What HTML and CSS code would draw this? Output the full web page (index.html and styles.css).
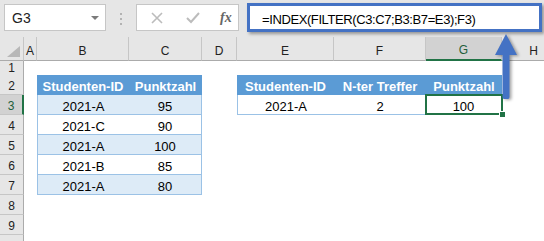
FILE: index.html
```html
<!DOCTYPE html>
<html lang="de">
<head>
    <meta charset="UTF-8">
    <meta name="viewport" content="width=device-width, initial-scale=1.0">
    <title>INDEX FILTER</title>
    <link rel="stylesheet" href="styles.css">
</head>
<body>
    <div class="app">
        <div class="topbar">
            <div class="namebox">
                <span>G3</span>
                <span class="caret"></span>
            </div>
            <div class="grip"><i></i><i></i><i></i></div>
            <div class="fnbox">
                <svg class="cancel" width="12" height="12" viewBox="0 0 12 12">
                    <path d="M1 1 L11 11 M11 1 L1 11" stroke="#bcbcbc" stroke-width="1.6" fill="none"/>
                </svg>
                <svg class="enter" width="14" height="12" viewBox="0 0 14 12">
                    <path d="M1 6 L5 10 L13 1" stroke="#bcbcbc" stroke-width="2" fill="none"/>
                </svg>
                <span class="fx">fx</span>
            </div>
            <div class="formula">=INDEX(FILTER(C3:C7;B3:B7=E3);F3)</div>
        </div>

        <div class="sheet">
            <div class="row colhead">
                <div class="corner"><span></span></div>
                <div>A</div><div>B</div><div>C</div><div>D</div>
                <div>E</div><div>F</div><div class="sel">G</div><div>H</div>
            </div>
            <div class="row r1">
                <div class="rh">1</div>
            </div>
            <div class="row">
                <div class="rh">2</div><div></div>
                <div class="th">Studenten-ID</div><div class="th">Punktzahl</div><div></div>
                <div class="th">Studenten-ID</div><div class="th">N-ter Treffer</div><div class="th">Punktzahl</div>
            </div>
            <div class="row">
                <div class="rh sel">3</div><div></div>
                <div class="td band first">2021-A</div><div class="td band last">95</div><div></div>
                <div class="td first">2021-A</div><div class="td">2</div><div class="td last active">100</div>
            </div>
            <div class="row">
                <div class="rh">4</div><div></div>
                <div class="td first">2021-C</div><div class="td last">90</div>
            </div>
            <div class="row">
                <div class="rh">5</div><div></div>
                <div class="td band first">2021-A</div><div class="td band last">100</div>
            </div>
            <div class="row">
                <div class="rh">6</div><div></div>
                <div class="td first">2021-B</div><div class="td last">85</div>
            </div>
            <div class="row">
                <div class="rh">7</div><div></div>
                <div class="td band first">2021-A</div><div class="td band last">80</div>
            </div>
            <div class="row"><div class="rh">8</div></div>
            <div class="row"><div class="rh">9</div></div>
            <div class="row"><div class="rh"></div></div>
        </div>

        <svg class="arrow" width="30" height="70" viewBox="0 0 30 70">
            <path d="M12 1 L23 22 L15.5 22 L15.5 64 Q15.5 66 14 66 L10 66 Q8.5 66 8.5 64 L8.5 22 L1 22 Z" fill="#4472c4"/>
        </svg>
    </div>
</body>
</html>
```

FILE: styles.css
```css
body {
    margin: 0;
    overflow: hidden;
    background: #ffffff;
    font-family: "Liberation Sans", Arial, sans-serif;
}

.app {
    position: relative;
    width: 544px;
    height: 241px;
    overflow: hidden;
}

/* formula bar */
.topbar {
    display: flex;
    align-items: flex-start;
    height: 37px;
    padding: 4px 0 0 4px;
    box-sizing: border-box;
    background: #e6e6e6;
}

.namebox {
    display: flex;
    align-items: center;
    justify-content: space-between;
    width: 102px;
    height: 27px;
    box-sizing: border-box;
    padding: 0 6px 0 7px;
    background: #ffffff;
    border: 1px solid #c6c6c6;
    font-size: 14px;
    color: #222222;
}

.caret {
    border-left: 4px solid transparent;
    border-right: 4px solid transparent;
    border-top: 4px solid #7b7b7b;
}

.grip {
    display: flex;
    flex-direction: column;
    align-items: center;
    gap: 3px;
    width: 30px;
    padding-top: 9px;
}

.grip i {
    width: 2px;
    height: 2px;
    background: #b3b3b3;
}

.fnbox {
    display: flex;
    align-items: center;
    width: 103px;
    height: 27px;
    box-sizing: border-box;
    padding-left: 14px;
    background: #ffffff;
    border: 1px solid #c6c6c6;
}

.cancel {
    margin-right: 23px;
}

.enter {
    margin-right: 20px;
}

.fx {
    font-family: "Liberation Serif", serif;
    font-style: italic;
    font-weight: bold;
    font-size: 14px;
    color: #666666;
}

.formula {
    width: 295px;
    height: 29px;
    box-sizing: border-box;
    margin: -1px 0 0 8px;
    padding: 6px 0 0 12px;
    background: #ffffff;
    border: 3px solid #4472c4;
    box-shadow: 2px 2px 3px rgba(0, 0, 0, 0.35);
    font-size: 13px;
    letter-spacing: -0.4px;
    color: #000000;
    white-space: nowrap;
}

/* grid */
.row {
    display: grid;
    grid-template-columns: 24px 13px 92px 73px 35px 97px 92px 76px 64px;
    height: 20px;
}

.row > div {
    box-sizing: border-box;
    display: flex;
    align-items: center;
    justify-content: center;
    padding-top: 3px;
    font-size: 13px;
}

.r1 {
    height: 14px;
}

.r1 > .rh {
    padding-top: 0;
}

.colhead {
    height: 24px;
    background: #e6e6e6;
}

.colhead > div {
    padding-top: 4px;
    font-size: 12px;
    color: #222222;
    border-right: 1px solid #c6c6c6;
    border-bottom: 1px solid #ababab;
}

.colhead > .sel {
    background: #d2d2d2;
    color: #1f5f3a;
    border-bottom: 2px solid #217346;
}

.corner {
    position: relative;
}

.corner span {
    position: absolute;
    right: 3px;
    bottom: 3px;
    border-left: 13px solid transparent;
    border-bottom: 11px solid #b8b8b8;
}

.rh {
    background: #e6e6e6;
    border-right: 1px solid #ababab;
    border-bottom: 1px solid #c6c6c6;
    font-size: 12px !important;
    color: #222222;
}

.rh.sel {
    background: #d2d2d2;
    color: #1f5f3a;
    border-right: 2px solid #217346;
}

/* tables */
.th {
    background: #5b9bd5;
    color: #ffffff;
    font-weight: bold;
}

.td {
    color: #000000;
    border-bottom: 1px solid #9bc2e6;
}

.band {
    background: #ddebf7;
}

.first {
    border-left: 1px solid #9bc2e6;
}

.last {
    border-right: 1px solid #9bc2e6;
}

.active {
    position: relative;
}

.active::after {
    content: "";
    position: absolute;
    top: -1px;
    left: -1px;
    right: -2px;
    bottom: -1px;
    border: 2px solid #217346;
}

.active::before {
    content: "";
    position: absolute;
    right: -5px;
    bottom: -4px;
    width: 5px;
    height: 5px;
    background: #217346;
    border: 1px solid #ffffff;
    z-index: 1;
}

.arrow {
    position: absolute;
    left: 494px;
    top: 33px;
    filter: drop-shadow(2px 1px 1.5px rgba(0, 0, 0, 0.35));
}
```
